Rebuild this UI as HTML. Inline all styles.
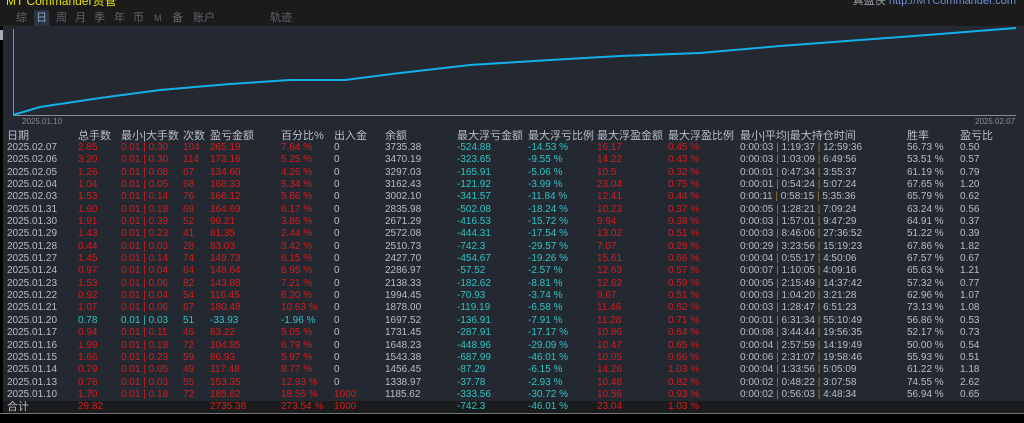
<!DOCTYPE html>
<html><head><meta charset="utf-8"><style>
*{margin:0;padding:0;box-sizing:border-box}
body{width:1024px;height:423px;overflow:hidden;background:#000;font-family:"Liberation Sans","Noto Sans CJK SC",sans-serif;position:relative}
#top{position:absolute;left:0;top:0;width:1024px;height:26px;background:#1b1b1c}
#main{position:absolute;left:3px;top:26px;width:1021px;height:387px;background:#232831}
.t{position:absolute;top:-8px;font-size:12px;color:#e8e000;left:6px}
.r{position:absolute;top:-8px;right:8px;font-size:11px;color:#9aa0a8}
.r b{font-weight:normal;color:#6f8fd8}
.tab{position:absolute;top:10px;font-size:11px;color:#60656c;line-height:16px}
.sel{background:#2b3440;color:#8ea4bf;padding:0 2px}
table{position:absolute;left:7px;border-collapse:collapse;table-layout:fixed;font-size:10px;color:#b9bdc4}
td{height:12.35px;line-height:12.35px;white-space:nowrap;padding:0;overflow:hidden}
.h td{font-size:11px;color:#b9bdc4;height:12px;line-height:12px}
.R{color:#d81b1b}.C{color:#2fc4c4}.s{color:#b07830}
#tot{position:absolute;left:3px;top:401px;width:1021px;height:12px;background:#1b1c1e}
</style></head><body>
<div id="top">
<div class="t">MT Commander资管</div>
<div class="r">真盈侠 <b>http://MTCommander.com</b></div>
<span class="tab" style="left:16px">综</span>
<span class="tab sel" style="left:34px">日</span>
<span class="tab" style="left:56px">周</span>
<span class="tab" style="left:75px">月</span>
<span class="tab" style="left:94px">季</span>
<span class="tab" style="left:114px">年</span>
<span class="tab" style="left:133px">币</span>
<span class="tab" style="left:154px;font-size:9px">M</span>
<span class="tab" style="left:172px">备</span>
<span class="tab" style="left:193px">账户</span>
<span class="tab" style="left:270px">轨迹</span>
</div>
<div id="main"></div>
<div style="position:absolute;left:0;top:30px;width:3px;height:10px;background:#aab"></div>
<svg style="position:absolute;left:0;top:26px" width="1024" height="100">
<line x1="13.5" y1="3" x2="13.5" y2="90" stroke="#8a8e94" stroke-width="1"/>
<line x1="13" y1="89.5" x2="1016" y2="89.5" stroke="#8a8e94" stroke-width="1"/>
<polyline fill="none" stroke="#12b0e8" stroke-width="2" points="13,89 40,81 100,72 160,64 230,58 290,54 345,54 400,47 470,39 550,34 620,30 700,27 780,20 860,14 940,8 1016,2"/>
<text x="22" y="98" font-size="8" fill="#8a8e94" font-family="Liberation Sans">2025.01.10</text>
<text x="975" y="98" font-size="8" fill="#8a8e94" font-family="Liberation Sans">2025.02.07</text>
</svg>
<div id="tot"></div>
<div style="position:absolute;left:0;top:413px;width:1024px;height:1px;background:#777"></div>
<table style="top:130px">
<colgroup><col style="width:71px"><col style="width:43px"><col style="width:62px"><col style="width:27px"><col style="width:71px"><col style="width:53px"><col style="width:51px"><col style="width:72px"><col style="width:71px"><col style="width:69px"><col style="width:71px"><col style="width:72px"><col style="width:167px"><col style="width:53px"><col style="width:64px"></colgroup>
<tr class="h"><td>日期</td><td>总手数</td><td>最小|大手数</td><td>次数</td><td>盈亏金额</td><td>百分比%</td><td>出入金</td><td>余额</td><td>最大浮亏金额</td><td>最大浮亏比例</td><td>最大浮盈金额</td><td>最大浮盈比例</td><td>最小|平均|最大持仓时间</td><td>胜率</td><td>盈亏比</td></tr>
<tr><td>2025.02.07</td><td class="R">2.85</td><td class="R">0.01 | 0.30</td><td class="R">104</td><td class="R">265.19</td><td class="R">7.64 %</td><td>0</td><td>3735.38</td><td class="C">-524.88</td><td class="C">-14.53 %</td><td class="R">16.17</td><td class="R">0.45 %</td><td>0:00:03 <span class="s">|</span> 1:19:37 <span class="s">|</span> 12:59:36</td><td>56.73 %</td><td>0.50</td></tr>
<tr><td>2025.02.06</td><td class="R">3.20</td><td class="R">0.01 | 0.30</td><td class="R">114</td><td class="R">173.16</td><td class="R">5.25 %</td><td>0</td><td>3470.19</td><td class="C">-323.65</td><td class="C">-9.55 %</td><td class="R">14.22</td><td class="R">0.43 %</td><td>0:00:03 <span class="s">|</span> 1:03:09 <span class="s">|</span> 6:49:56</td><td>53.51 %</td><td>0.57</td></tr>
<tr><td>2025.02.05</td><td class="R">1.26</td><td class="R">0.01 | 0.08</td><td class="R">67</td><td class="R">134.60</td><td class="R">4.26 %</td><td>0</td><td>3297.03</td><td class="C">-165.91</td><td class="C">-5.06 %</td><td class="R">10.5</td><td class="R">0.32 %</td><td>0:00:01 <span class="s">|</span> 0:47:34 <span class="s">|</span> 3:55:37</td><td>61.19 %</td><td>0.79</td></tr>
<tr><td>2025.02.04</td><td class="R">1.04</td><td class="R">0.01 | 0.05</td><td class="R">68</td><td class="R">168.33</td><td class="R">5.34 %</td><td>0</td><td>3162.43</td><td class="C">-121.92</td><td class="C">-3.99 %</td><td class="R">23.04</td><td class="R">0.75 %</td><td>0:00:01 <span class="s">|</span> 0:54:24 <span class="s">|</span> 5:07:24</td><td>67.65 %</td><td>1.20</td></tr>
<tr><td>2025.02.03</td><td class="R">1.53</td><td class="R">0.01 | 0.14</td><td class="R">76</td><td class="R">166.12</td><td class="R">5.86 %</td><td>0</td><td>3002.10</td><td class="C">-341.57</td><td class="C">-11.84 %</td><td class="R">12.41</td><td class="R">0.44 %</td><td>0:00:11 <span class="s">|</span> 0:58:15 <span class="s">|</span> 5:35:36</td><td>65.79 %</td><td>0.62</td></tr>
<tr><td>2025.01.31</td><td class="R">1.60</td><td class="R">0.01 | 0.18</td><td class="R">68</td><td class="R">164.69</td><td class="R">6.17 %</td><td>0</td><td>2835.98</td><td class="C">-502.08</td><td class="C">-18.24 %</td><td class="R">10.23</td><td class="R">0.37 %</td><td>0:00:05 <span class="s">|</span> 1:28:21 <span class="s">|</span> 7:09:24</td><td>63.24 %</td><td>0.56</td></tr>
<tr><td>2025.01.30</td><td class="R">1.91</td><td class="R">0.01 | 0.39</td><td class="R">52</td><td class="R">99.21</td><td class="R">3.86 %</td><td>0</td><td>2671.29</td><td class="C">-416.53</td><td class="C">-15.72 %</td><td class="R">9.94</td><td class="R">0.38 %</td><td>0:00:03 <span class="s">|</span> 1:57:01 <span class="s">|</span> 9:47:29</td><td>64.91 %</td><td>0.37</td></tr>
<tr><td>2025.01.29</td><td class="R">1.43</td><td class="R">0.01 | 0.23</td><td class="R">41</td><td class="R">61.35</td><td class="R">2.44 %</td><td>0</td><td>2572.08</td><td class="C">-444.31</td><td class="C">-17.54 %</td><td class="R">13.02</td><td class="R">0.51 %</td><td>0:00:03 <span class="s">|</span> 8:46:06 <span class="s">|</span> 27:36:52</td><td>51.22 %</td><td>0.39</td></tr>
<tr><td>2025.01.28</td><td class="R">0.44</td><td class="R">0.01 | 0.03</td><td class="R">28</td><td class="R">83.03</td><td class="R">3.42 %</td><td>0</td><td>2510.73</td><td class="C">-742.3</td><td class="C">-29.57 %</td><td class="R">7.07</td><td class="R">0.29 %</td><td>0:00:29 <span class="s">|</span> 3:23:56 <span class="s">|</span> 15:19:23</td><td>67.86 %</td><td>1.82</td></tr>
<tr><td>2025.01.27</td><td class="R">1.45</td><td class="R">0.01 | 0.14</td><td class="R">74</td><td class="R">149.73</td><td class="R">6.15 %</td><td>0</td><td>2427.70</td><td class="C">-454.67</td><td class="C">-19.26 %</td><td class="R">15.61</td><td class="R">0.66 %</td><td>0:00:04 <span class="s">|</span> 0:55:17 <span class="s">|</span> 4:50:06</td><td>67.57 %</td><td>0.67</td></tr>
<tr><td>2025.01.24</td><td class="R">0.97</td><td class="R">0.01 | 0.04</td><td class="R">64</td><td class="R">148.64</td><td class="R">6.95 %</td><td>0</td><td>2286.97</td><td class="C">-57.52</td><td class="C">-2.57 %</td><td class="R">12.63</td><td class="R">0.57 %</td><td>0:00:07 <span class="s">|</span> 1:10:05 <span class="s">|</span> 4:09:16</td><td>65.63 %</td><td>1.21</td></tr>
<tr><td>2025.01.23</td><td class="R">1.53</td><td class="R">0.01 | 0.06</td><td class="R">82</td><td class="R">143.88</td><td class="R">7.21 %</td><td>0</td><td>2138.33</td><td class="C">-182.62</td><td class="C">-8.81 %</td><td class="R">12.62</td><td class="R">0.59 %</td><td>0:00:05 <span class="s">|</span> 2:15:49 <span class="s">|</span> 14:37:42</td><td>57.32 %</td><td>0.77</td></tr>
<tr><td>2025.01.22</td><td class="R">0.92</td><td class="R">0.01 | 0.04</td><td class="R">54</td><td class="R">116.45</td><td class="R">6.20 %</td><td>0</td><td>1994.45</td><td class="C">-70.93</td><td class="C">-3.74 %</td><td class="R">9.67</td><td class="R">0.51 %</td><td>0:00:03 <span class="s">|</span> 1:04:20 <span class="s">|</span> 3:21:28</td><td>62.96 %</td><td>1.07</td></tr>
<tr><td>2025.01.21</td><td class="R">1.07</td><td class="R">0.01 | 0.06</td><td class="R">67</td><td class="R">180.48</td><td class="R">10.63 %</td><td>0</td><td>1878.00</td><td class="C">-119.19</td><td class="C">-6.58 %</td><td class="R">11.46</td><td class="R">0.62 %</td><td>0:00:03 <span class="s">|</span> 1:28:47 <span class="s">|</span> 6:51:23</td><td>73.13 %</td><td>1.08</td></tr>
<tr><td>2025.01.20</td><td class="C">0.78</td><td class="C">0.01 | 0.03</td><td class="C">51</td><td class="C">-33.93</td><td class="C">-1.96 %</td><td>0</td><td>1697.52</td><td class="C">-136.91</td><td class="C">-7.91 %</td><td class="R">11.28</td><td class="R">0.71 %</td><td>0:00:01 <span class="s">|</span> 6:31:34 <span class="s">|</span> 55:10:49</td><td>56.86 %</td><td>0.53</td></tr>
<tr><td>2025.01.17</td><td class="R">0.94</td><td class="R">0.01 | 0.11</td><td class="R">46</td><td class="R">83.22</td><td class="R">5.05 %</td><td>0</td><td>1731.45</td><td class="C">-287.91</td><td class="C">-17.17 %</td><td class="R">10.86</td><td class="R">0.64 %</td><td>0:00:08 <span class="s">|</span> 3:44:44 <span class="s">|</span> 19:56:35</td><td>52.17 %</td><td>0.73</td></tr>
<tr><td>2025.01.16</td><td class="R">1.99</td><td class="R">0.01 | 0.18</td><td class="R">72</td><td class="R">104.85</td><td class="R">6.79 %</td><td>0</td><td>1648.23</td><td class="C">-448.96</td><td class="C">-29.09 %</td><td class="R">10.47</td><td class="R">0.65 %</td><td>0:00:04 <span class="s">|</span> 2:57:59 <span class="s">|</span> 14:19:49</td><td>50.00 %</td><td>0.54</td></tr>
<tr><td>2025.01.15</td><td class="R">1.66</td><td class="R">0.01 | 0.23</td><td class="R">59</td><td class="R">86.93</td><td class="R">5.97 %</td><td>0</td><td>1543.38</td><td class="C">-687.99</td><td class="C">-46.01 %</td><td class="R">10.05</td><td class="R">0.66 %</td><td>0:00:06 <span class="s">|</span> 2:31:07 <span class="s">|</span> 19:58:46</td><td>55.93 %</td><td>0.51</td></tr>
<tr><td>2025.01.14</td><td class="R">0.79</td><td class="R">0.01 | 0.05</td><td class="R">49</td><td class="R">117.48</td><td class="R">8.77 %</td><td>0</td><td>1456.45</td><td class="C">-87.29</td><td class="C">-6.15 %</td><td class="R">14.26</td><td class="R">1.03 %</td><td>0:00:04 <span class="s">|</span> 1:33:56 <span class="s">|</span> 5:05:09</td><td>61.22 %</td><td>1.18</td></tr>
<tr><td>2025.01.13</td><td class="R">0.76</td><td class="R">0.01 | 0.03</td><td class="R">55</td><td class="R">153.35</td><td class="R">12.93 %</td><td>0</td><td>1338.97</td><td class="C">-37.78</td><td class="C">-2.93 %</td><td class="R">10.48</td><td class="R">0.82 %</td><td>0:00:02 <span class="s">|</span> 0:48:22 <span class="s">|</span> 3:07:58</td><td>74.55 %</td><td>2.62</td></tr>
<tr><td>2025.01.10</td><td class="R">1.70</td><td class="R">0.01 | 0.18</td><td class="R">72</td><td class="R">185.62</td><td class="R">18.56 %</td><td class="R">1000</td><td>1185.62</td><td class="C">-333.56</td><td class="C">-30.72 %</td><td class="R">10.56</td><td class="R">0.93 %</td><td>0:00:02 <span class="s">|</span> 0:56:03 <span class="s">|</span> 4:48:34</td><td>56.94 %</td><td>0.65</td></tr>
<tr><td style="font-size:11px">合计</td><td class="R">29.82</td><td></td><td></td><td class="R">2735.38</td><td class="R">273.54 %</td><td class="R">1000</td><td></td><td class="C">-742.3</td><td class="C">-46.01 %</td><td class="R">23.04</td><td class="R">1.03 %</td><td></td><td></td><td></td></tr>
</table>
</body></html>
